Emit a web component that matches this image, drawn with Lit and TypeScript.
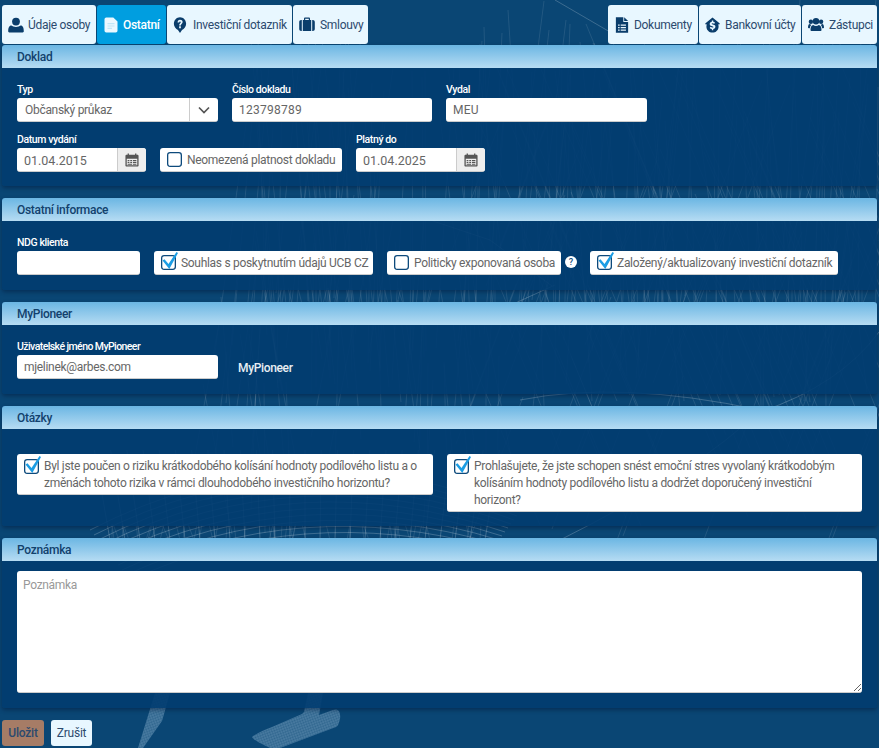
import { LitElement, html, css, svg } from "lit";
import { customElement } from "lit/decorators.js";

function rng(seed: number) {
  let s = seed;
  return () => {
    s = (s * 16807) % 2147483647;
    return s / 2147483647;
  };
}

function wire(): string {
  const r = rng(4242);
  let d = "";
  const line = (x: number, y: number, x2: number, y2: number) => {
    d += `M${x.toFixed(0)} ${y.toFixed(0)}L${x2.toFixed(0)} ${y2.toFixed(0)}`;
  };
  // steep mesh, upper right
  for (let i = 0; i < 130; i++) {
    const x = 250 + r() * 680;
    const y = r() * 130;
    line(x, y, x + (r() - 0.5) * 80, y + 280);
  }
  // opposite diagonals
  for (let i = 0; i < 70; i++) {
    const x = 470 + r() * 420;
    const y = r() * 360;
    line(x, y, x + 70, y + 170);
  }
  for (let i = 0; i < 40; i++) {
    const x = 500 + r() * 400;
    const y = 60 + r() * 340;
    line(x, y, x - 60, y + 160);
  }
  // centre
  for (let i = 0; i < 45; i++) {
    const x = 200 + r() * 300;
    const y = 190 + r() * 200;
    line(x, y, x + (r() - 0.5) * 60, y + 150);
  }
  // gap hatching between panels
  for (let i = 0; i < 60; i++) {
    const x = 250 + r() * 630;
    line(x, 288, x + (r() - 0.5) * 10, 304);
  }
  for (let i = 0; i < 50; i++) {
    const x = 100 + r() * 400;
    line(x, 524, x + (r() - 0.5) * 14, 540);
  }
  return d;
}

function dome(): string {
  let d = "";
  for (let i = 0; i < 11; i++) {
    const y = 452 + i * 8;
    d += `M${90 + i * 4} ${y + 78 - i * 3}Q300 ${y - 30} ${520 - i * 3} ${y + 60 - i * 4}`;
  }
  for (let i = 0; i < 26; i++) {
    const x = 110 + i * 15;
    d += `M${x} 540L${x + (i - 13) * 1.2} 450`;
  }
  d += "M520 400Q620 380 760 410Q700 470 560 540";
  return d;
}

const ICONS = {
  user: svg`<circle cx="8" cy="4.600" r="3.900"/><path d="M1.300 15.400c-.7 0-1.100-.5-1.100-1.200 0-3 .8-5.600 3.200-5.600 1 .8 2.600 1.300 4.600 1.300s3.600-.5 4.600-1.300c2.400 0 3.200 2.600 3.200 5.600 0 .7-.4 1.200-1.100 1.200z"/>`,
  file: svg`<path d="M3.300 .5h7l4.200 4v9.300a1.800 1.800 0 0 1-1.800 1.800H3.300a1.800 1.800 0 0 1-1.800-1.800V2.300A1.800 1.800 0 0 1 3.300 .5z"/><path class="cut" d="M4.500 6h7v1.200h-7zM4.500 8.400h7v1.200h-7zM4.500 10.800h4.500V12H4.500z"/>`,
  pin: svg`<path fill-rule="evenodd" d="M8 .3c3.900 0 7 2.900 7 6.500 0 2.900-2.200 5.100-4.700 6.100L8 16l-2.300-3.100C3.200 11.900 1 9.700 1 6.800 1 3.200 4.100 .3 8 .3zM7 9.300v1.900h2V9.300zM5.200 5.600h1.900c0-.7.300-1.100.9-1.100.5 0 .9.300.9.800 0 .9-1.900 1.100-1.900 3.100H9c0-1.300 2-1.500 2-3.300C11 3.600 9.700 2.800 8 2.800c-1.700 0-2.800 1.100-2.800 2.800z"/>`,
  case: svg`<path fill-rule="evenodd" d="M5 3V1.700C5 1 5.500.5 6.200.5h3.600c.7 0 1.200.5 1.200 1.200V3h1.200v11H3.800V3zm1.200 0h3.600V1.700H6.200zM2.800 3v11h-.6C1 14 .2 13.200.2 12V5C.2 3.800 1 3 2.200 3zM13.200 3h.6c1.200 0 2 .8 2 2v7c0 1.200-.8 2-2 2h-.6z"/>`,
  doc: svg`<path fill-rule="evenodd" d="M1 .3h8.500V5H15v10.700H1zM10.500.3 15 4h-4.500zM3.500 7.500v1.200h1.800V7.500zm3 0v1.200h6V7.500zM3.500 10v1.200h1.800V10zm3 0v1.200h6V10zm-3 2.500v1.200h1.800v-1.200zm3 0v1.200h6v-1.200z"/>`,
  bank: svg`<path fill-rule="evenodd" d="M8 .4l7.800 6.200-.8 1.100-1.100-.8c.4.800.6 1.600.6 2.500 0 3.400-2.900 6.200-6.500 6.200S1.500 12.800 1.500 9.400c0-.9.200-1.700.6-2.500l-1.100.8-.8-1.100zM7.300 3.600v1.100C5.900 4.900 5 5.800 5 7c0 2.600 4 1.800 4 3 0 .4-.5.600-1 .6-.8 0-1.500-.3-2.100-.8l-.9 1.100c.6.600 1.400 1 2.300 1.100v1.200h1.500V12c1.400-.2 2.300-1.100 2.300-2.300 0-2.600-4-1.800-4-2.900 0-.4.400-.6 1-.6.600 0 1.200.2 1.700.6l.9-1.100c-.6-.5-1.200-.8-1.900-.9V3.600z"/>`,
  users: svg`<circle cx="8" cy="4.200" r="3.200"/><circle cx="2.900" cy="4.800" r="2.200"/><circle cx="13.100" cy="4.800" r="2.200"/><path d="M3.400 14c-.6 0-.9-.4-.9-1 0-2.700.9-5 2.700-5 .8.600 1.800 1 2.800 1s2-.4 2.800-1c1.800 0 2.700 2.300 2.700 5 0 .6-.3 1-.9 1z"/><path d="M0 10.500c0-1.900.5-3.500 1.800-3.500.4.300.9.600 1.500.700-.8.900-1.300 2-1.500 3.500H.9c-.6 0-.9-.2-.9-.7zM16 10.500c0-1.900-.5-3.500-1.800-3.500-.4.300-.9.600-1.500.700.8.900 1.300 2 1.500 3.500h.9c.6 0 .9-.2.900-.7z"/>`,
};

type IconName = keyof typeof ICONS;

const calendar = html`<svg class="cal" viewBox="0 0 16 16"><path fill-rule="evenodd" d="M3 .5h1.500V2h7V.5H13V2h1.200c.7 0 1.300.6 1.300 1.300v10.900c0 .7-.6 1.300-1.300 1.300H1.800c-.7 0-1.300-.6-1.300-1.300V3.300C.5 2.600 1.100 2 1.800 2H3zM2 6.500V14h12V6.500zM3 8h2v1.300H3zm3 0h2v1.300H6zm3 0h4v1.300H9zM3 10.200h2v1.300H3zm3 0h2v1.300H6zm3 0h4v1.300H9zM3 12.300h5v1H3zm6 0h4v1H9z"/></svg>`;

@customElement("app-root")
export class AppRoot extends LitElement {
  static styles = css`
    :host {
      display: block;
      position: relative;
      width: 879px;
      height: 748px;
      overflow: hidden;
      background: #0a4674;
      font-family: Roboto, "Liberation Sans", sans-serif;
      font-size: 12px;
      color: #666;
    }
    .bg {
      position: absolute;
      inset: 0;
      width: 879px;
      height: 748px;
    }
    .mesh { fill: none; stroke: #fff; stroke-width: .5; opacity: .2; }
    .mesh2 { fill: none; stroke: #fff; stroke-width: .7; opacity: .3; }
    .club { fill: #5686aa; opacity: .8; }
    .hatch { stroke: #0a4674; stroke-width: .7; opacity: .55; }
    .page {
      position: relative;
      box-sizing: border-box;
      height: 748px;
      padding: 5px 2px 0;
    }
    .tabs {
      display: flex;
      justify-content: space-between;
      height: 40px;
    }
    .tabgroup { display: flex; gap: 1px; }
    .tab {
      box-sizing: border-box;
      height: 39px;
      display: flex;
      align-items: center;
      background: #e8f7ff;
      border-radius: 3px;
      color: #2c4a6e;
      font-size: 12px;
      letter-spacing: -.3px;
      white-space: nowrap;
      padding-top: 1px;
    }
    .tab.active { background: #009ee0; color: #fff; font-weight: 500; }
    .tab svg { height: 16px; fill: #0a3d6b; flex: none; }
    .tab.active svg { fill: #eaf8ff; }
    .tab.active svg .cut { fill: #bfe6f8; }
    .tab svg .cut { fill: #e8f7ff; }
    .panel {
      background: rgba(1, 60, 112, .9);
      border-radius: 3px;
      box-shadow: 0 2px 4px rgba(0, 20, 50, .45);
      margin-bottom: 12px;
    }
    .head {
      box-sizing: border-box;
      height: 23px;
      line-height: 25px;
      padding-left: 15px;
      background: linear-gradient(#6bb6e3, #b6dcf3);
      border-radius: 3px 3px 0 0;
      color: #12416d;
      font-size: 12px;
      font-weight: 500;
      letter-spacing: -.3px;
    }
    .body { box-sizing: border-box; padding: 0 15px; }
    .doklad { height: 118px; padding-top: 15px; }
    .info { height: 69px; padding-top: 15px; }
    .pioneer { height: 69px; padding-top: 15px; }
    .otazky { height: 97px; padding-top: 25px; }
    .pozn { height: 147px; padding-top: 10px; }
    .row { display: flex; align-items: flex-end; gap: 14px; }
    .row + .row { margin-top: 11px; }
    .field { display: flex; flex-direction: column; }
    label {
      display: block;
      height: 15px;
      line-height: 13px;
      font-size: 10.500px;
      font-weight: 500;
      letter-spacing: -.4px;
      color: #fff;
      white-space: nowrap;
    }
    label.long { letter-spacing: -.58px; }
    .control {
      box-sizing: border-box;
      height: 24px;
      line-height: 25px;
      background: #fff;
      border-bottom: 1px solid #ccc;
      border-radius: 3px;
      display: flex;
      overflow: hidden;
      font-size: 12px;
      color: #666;
    }
    .val { flex: 1; padding-left: 7px; white-space: nowrap; }
    .txt { letter-spacing: -.3px; }
    .num { letter-spacing: .25px; }
    .w201 { width: 201px; }
    .w200 { width: 200px; }
    .w129 { width: 129px; }
    .w123 { width: 123px; }
    .sel .val { padding-left: 8px; }
    .sel .arrow {
      box-sizing: border-box;
      width: 29px;
      border-left: 1px solid #ccc;
      display: flex;
      align-items: center;
      justify-content: center;
    }
    .arrow svg { width: 12px; height: 8px; fill: none; stroke: #555; stroke-width: 1.700; }
    .date .val { font-size: 12.500px; letter-spacing: 0; }
    .date .btn {
      box-sizing: border-box;
      width: 29px;
      background: #eee;
      border-left: 1px solid #ccc;
      display: flex;
      align-items: center;
      justify-content: center;
    }
    .cal { width: 14px; height: 14px; fill: #555; }
    .check {
      box-sizing: border-box;
      height: 24px;
      display: flex;
      align-items: center;
      gap: 5px;
      padding-left: 7px;
      background: #fff;
      border-bottom: 1px solid #ccc;
      border-radius: 3px;
      color: #666;
      font-size: 12px;
      letter-spacing: -.3px;
      white-space: nowrap;
    }
    .box { width: 15px; height: 15px; flex: none; overflow: visible; }
    .box rect { fill: #fff; stroke: #0d4a7c; stroke-width: 1.300; }
    .box path { fill: #1b9de4; }
    .c1 { width: 182px; }
    .c2 { width: 219px; }
    .c3 { width: 174px; }
    .c4 { width: 248px; }
    .help {
      width: 12px;
      height: 12px;
      border-radius: 50%;
      background: #fff;
      color: #0d4a7c;
      font-size: 9px;
      font-weight: 500;
      line-height: 12px;
      text-align: center;
      margin: 0 -1px 7px -10px;
    }
    .mytext {
      color: #e8eef4;
      font-size: 12px;
      font-weight: 500;
      line-height: 22px;
      letter-spacing: -.35px;
      margin-left: 6px;
    }
    .qrow { display: flex; align-items: flex-start; gap: 14px; }
    .q {
      box-sizing: border-box;
      display: flex;
      gap: 5px;
      padding: 4px 6px 0 7px;
      background: #fff;
      border-bottom: 1px solid #ccc;
      border-radius: 3px;
      line-height: 17px;
      font-size: 12px;
      letter-spacing: -.3px;
      color: #666;
    }
    .q .box { margin-top: 1px; }
    .q1 { width: 416px; height: 41px; }
    .q2 { width: 415px; height: 58px; }
    .note {
      box-sizing: border-box;
      height: 122px;
      position: relative;
      background: #fff;
      border-bottom: 1px solid #ccc;
      border-radius: 3px;
      padding: 7px 6px;
      color: #999;
      font-size: 12px;
      letter-spacing: -.3px;
    }
    .grip {
      position: absolute;
      right: 1px;
      bottom: 1px;
      width: 8px;
      height: 8px;
      fill: none;
      stroke: #666;
      stroke-width: 1;
    }
    .actions { display: flex; gap: 7px; }
    .b {
      box-sizing: border-box;
      height: 26px;
      line-height: 27px;
      text-align: center;
      border-radius: 3px;
      font-size: 12px;
      letter-spacing: -.2px;
      color: #2c4a6e;
    }
    .save { width: 42px; background: #a67c66; font-weight: 500; }
    .cancel { width: 41px; background: #e8f7ff; }
  `;

  private tab(icon: IconName, text: string, w: number, pad: number, iw: number, gap: number, active = false) {
    return html`<div class="tab ${active ? "active" : ""}" style="width:${w}px;padding-left:${pad}px;gap:${gap}px">
      <svg viewBox="0 0 16 16" preserveAspectRatio="none" style="width:${iw}px"><g>${ICONS[icon]}</g></svg><span>${text}</span>
    </div>`;
  }

  private box(on: boolean) {
    return html`<svg class="box" viewBox="0 0 15 15">
      <rect x=".65" y=".65" width="13.700" height="13.700" rx="2.500"></rect>
      ${on ? svg`<path d="M1.500 5.500L3.500 4.200 7.500 9 15.500 -3 17 -2 8.300 14z"/>` : ""}
    </svg>`;
  }

  private check(cls: string, on: boolean, text: string) {
    return html`<div class="check ${cls}">${this.box(on)}<span>${text}</span></div>`;
  }

  private date(label: string, value: string) {
    return html`<div class="field">
      <label>${label}</label>
      <div class="control date w129">
        <span class="val">${value}</span><span class="btn">${calendar}</span>
      </div>
    </div>`;
  }

  render() {
    return html`
      <svg class="bg" viewBox="0 0 879 748">
        <defs>
          <pattern id="h" width="2.500" height="2.500" patternUnits="userSpaceOnUse" patternTransform="rotate(-20)">
            <line class="hatch" x1="0" y1="0" x2="2.500" y2="0"></line>
            <line class="hatch" x1="0" y1="0" x2="0" y2="2.500"></line>
          </pattern>
        </defs>
        <path class="mesh" d="${wire()}"></path>
        <path class="mesh2" d="${dome()}"></path>
        <path class="mesh2" d="M879 332Q840 385 760 412M555 0L610 32M500 310L555 285M415 215L490 240L552 286"></path>
        <path class="club" d="M155 693h15l-8 28-19 27h-5zM308 693h15l-4 22 14-5c5-2 8 2 7 9-1 4-2 7-4 8l-56 21h-10c-6-3-17-8-18-11 5-4 12-7 20-10l30-13 2-2z"></path>
        <path fill="url(#h)" d="M155 693h15l-8 28-19 27h-5zM308 693h15l-4 22 14-5c5-2 8 2 7 9-1 4-2 7-4 8l-56 21h-10c-6-3-17-8-18-11 5-4 12-7 20-10l30-13 2-2z"></path>
      </svg>
      <div class="page">
        <div class="tabs">
          <div class="tabgroup">
            ${this.tab("user", "Údaje osoby", 94, 6, 16, 4)}
            ${this.tab("file", "Ostatní", 69, 6, 16, 4, true)}
            ${this.tab("pin", "Investiční dotazník", 125, 6, 14, 6)}
            ${this.tab("case", "Smlouvy", 75, 6, 16, 5)}
          </div>
          <div class="tabgroup">
            ${this.tab("doc", "Dokumenty", 90, 7, 14, 5)}
            ${this.tab("bank", "Bankovní účty", 102, 6, 15, 5)}
            ${this.tab("users", "Zástupci", 75, 6, 16, 5)}
          </div>
        </div>

        <section class="panel">
          <div class="head">Doklad</div>
          <div class="body doklad">
            <div class="row">
              <div class="field">
                <label>Typ</label>
                <div class="control sel w201">
                  <span class="val txt">Občanský průkaz</span>
                  <span class="arrow"><svg viewBox="0 0 12 8"><path d="M1 1.500l5 5 5-5"></path></svg></span>
                </div>
              </div>
              <div class="field">
                <label>Číslo dokladu</label>
                <div class="control w200"><span class="val num">123798789</span></div>
              </div>
              <div class="field">
                <label>Vydal</label>
                <div class="control w201"><span class="val num">MEU</span></div>
              </div>
            </div>
            <div class="row">
              ${this.date("Datum vydání", "01.04.2015")}
              ${this.check("c1", false, "Neomezená platnost dokladu")}
              ${this.date("Platný do", "01.04.2025")}
            </div>
          </div>
        </section>

        <section class="panel">
          <div class="head">Ostatní informace</div>
          <div class="body info">
            <div class="row">
              <div class="field">
                <label>NDG klienta</label>
                <div class="control w123"></div>
              </div>
              ${this.check("c2", true, "Souhlas s poskytnutím údajů UCB CZ")}
              ${this.check("c3", false, "Politicky exponovaná osoba")}
              <span class="help">?</span>
              ${this.check("c4", true, "Založený/aktualizovaný investiční dotazník")}
            </div>
          </div>
        </section>

        <section class="panel">
          <div class="head">MyPioneer</div>
          <div class="body pioneer">
            <div class="row">
              <div class="field">
                <label class="long">Uživatelské jméno MyPioneer</label>
                <div class="control w201"><span class="val txt">mjelinek@arbes.com</span></div>
              </div>
              <span class="mytext">MyPioneer</span>
            </div>
          </div>
        </section>

        <section class="panel">
          <div class="head">Otázky</div>
          <div class="body otazky">
            <div class="qrow">
              <div class="q q1">${this.box(true)}<span>Byl jste poučen o riziku krátkodobého kolísání hodnoty podílového listu a o změnách tohoto rizika v rámci dlouhodobého investičního horizontu?</span></div>
              <div class="q q2">${this.box(true)}<span>Prohlašujete, že jste schopen snést emoční stres vyvolaný krátkodobým kolísáním hodnoty podílového listu a dodržet doporučený investiční horizont?</span></div>
            </div>
          </div>
        </section>

        <section class="panel">
          <div class="head">Poznámka</div>
          <div class="body pozn">
            <div class="note">Poznámka
              <svg class="grip" viewBox="0 0 8 8"><path d="M8 1L1 8M8 5L5 8"></path></svg>
            </div>
          </div>
        </section>

        <div class="actions">
          <div class="b save">Uložit</div>
          <div class="b cancel">Zrušit</div>
        </div>
      </div>
    `;
  }
}
